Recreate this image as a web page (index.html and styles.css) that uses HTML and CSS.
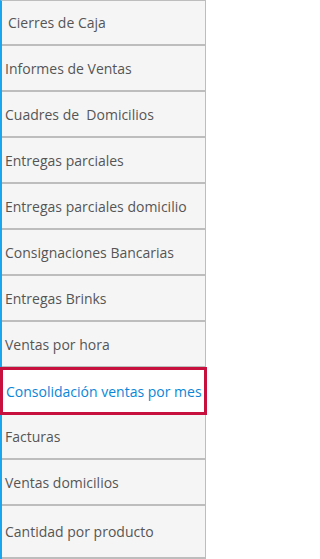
FILE: index.html
```html
<!DOCTYPE html>
<html lang="es">
<head>
<meta charset="utf-8">
<title>Menú</title>
<link rel="stylesheet" href="styles.css">
</head>
<body>
<ul class="menu">
  <li class="item first">Cierres de Caja</li>
  <li class="item">Informes de Ventas</li>
  <li class="item">Cuadres de&nbsp; Domicilios</li>
  <li class="item">Entregas parciales</li>
  <li class="item">Entregas parciales domicilio</li>
  <li class="item">Consignaciones Bancarias</li>
  <li class="item">Entregas Brinks</li>
  <li class="item">Ventas por hora</li>
  <li class="item active">Consolidación ventas por mes</li>
  <li class="item">Facturas</li>
  <li class="item">Ventas domicilios</li>
  <li class="item last">Cantidad por producto</li>
</ul>
</body>
</html>
```
FILE: styles.css
```css
html, body {
  margin: 0;
  padding: 0;
  background: #ffffff;
}

body {
  width: 207px;
  height: 559px;
  overflow: hidden;
  font-family: "Open Sans", "Noto Sans", sans-serif;
  font-size: 14px;
  color: #555555;
}

.menu {
  list-style: none;
  margin: 0;
  padding: 0;
  width: 203px;
  border-top: 1px solid #bdbdbd;
  border-left: 2px solid #1aa6ee;
  border-right: 1px solid #bdbdbd;
}

.item {
  display: flex;
  align-items: center;
  height: 43px;
  padding: 1px 0 0 3px;
  box-sizing: content-box;
  background: #f5f5f5;
  border-bottom: 1px solid #bdbdbd;
  white-space: nowrap;
  line-height: 1;
}

.item + .item {
  border-top: 1px solid #bdbdbd;
}

.item.first {
  height: 42px;
  padding-left: 6px;
}

.item.last {
  height: 50px;
  border-bottom-width: 2px;
}

.item.active {
  position: relative;
  z-index: 1;
  height: 41px;
  margin: 0 -2px -2px -2px;
  padding-left: 3px;
  background: #ffffff;
  border: 3px solid #c8103f;
  color: #0a86d8;
}
```
